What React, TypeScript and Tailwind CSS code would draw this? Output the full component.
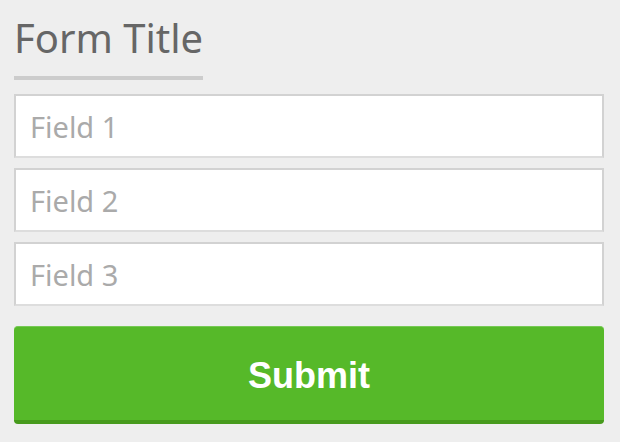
export default function App() {
  const fields = ['Field 1', 'Field 2', 'Field 3']

  return (
    <div className="min-h-[442px] w-[620px] bg-[#eeeeee] pl-[14px] pr-[16px] pt-[14px] font-['Noto_Sans',sans-serif]">
      <h1 className="inline-block border-b-[4px] border-[#cccccc] pb-[14px] text-[40px] leading-[48px] text-[#666666]">
        Form Title
      </h1>
      <form className="mt-[14px] flex flex-col gap-[10px]">
        {fields.map((f) => (
          <input
            key={f}
            placeholder={f}
            className="h-[64px] w-full border-2 border-[#d2d2d2] border-b-[#dddddd] bg-white px-[14px] text-[29px] text-[#555] outline-none placeholder:text-[#aaaaaa]"
          />
        ))}
        <button
          type="button"
          className="mt-[10px] h-[98px] w-full rounded-[4px] border-t border-b-[4px] border-t-[#76c955] border-b-[#469a1c] bg-[#56b929] pt-[4px] font-['Liberation_Sans',Arial,sans-serif] text-[36px] font-bold text-white"
        >
          Submit
        </button>
      </form>
    </div>
  )
}
